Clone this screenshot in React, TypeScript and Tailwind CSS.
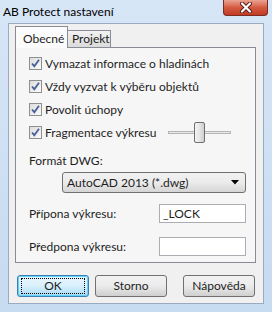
import React from 'react';

function CheckBox() {
  return (
    <span className="w-[13px] h-[13px] border border-[#8e8f8f] bg-gradient-to-br from-[#dcdcdc] to-[#fbfbfb] flex items-center justify-center shrink-0">
      <svg width="11" height="11" viewBox="0 0 11 11">
        <path d="M2 5.5 L4.3 8.2 L9 1.8" fill="none" stroke="#4a5f97" strokeWidth="1.8" />
      </svg>
    </span>
  );
}

function Row({ label, children }: { label: string; children?: React.ReactNode }) {
  return (
    <div className="h-[23px] flex items-center">
      <CheckBox />
      <span className="ml-[3px]">{label}</span>
      {children}
    </div>
  );
}

function Btn({ label, focused }: { label: string; focused?: boolean }) {
  return (
    <button
      className={`w-[72px] h-[22px] rounded-[3px] border flex items-center justify-center ${
        focused
          ? 'border-[#3c7fb1] bg-gradient-to-b from-[#eaf6fd] via-[#d9f0fc] to-[#a7d9f5] shadow-[inset_0_0_0_1px_#5fd3ff]'
          : 'border-[#707070] bg-gradient-to-b from-[#f2f2f2] via-[#ebebeb] to-[#cfcfcf]'
      }`}
    >
      {focused ? (
        <span className="w-[64px] h-[16px] border border-dotted border-black flex items-center justify-center">{label}</span>
      ) : (
        <span>{label}</span>
      )}
    </button>
  );
}

export default function App() {
  return (
    <div className="w-[272px] h-[312px] relative flex flex-col bg-gradient-to-b from-[#d7e6f7] to-[#c6daf0] font-['Lato',sans-serif] text-[12px] text-[#1e1e1e]">
      {/* title bar */}
      <div className="h-[23px] flex items-center pl-[3px] text-[12px] text-black">AB Protect nastavení</div>
      <div className="absolute left-[223px] top-0 w-[45px] h-[16px] rounded-b-[4px] border border-t-0 border-[#7b2b22] bg-gradient-to-b from-[#eaa393] via-[#d45a42] to-[#c13a22] flex items-center justify-center">
        <svg width="14" height="11" viewBox="0 0 14 11">
          <path d="M3 1.5 L11 9.5 M11 1.5 L3 9.5" stroke="#5a1d15" strokeWidth="4" strokeLinecap="round" />
          <path d="M3 1.5 L11 9.5 M11 1.5 L3 9.5" stroke="#ffffff" strokeWidth="2.2" strokeLinecap="round" />
        </svg>
      </div>

      {/* client area */}
      <div className="mx-[8px] h-[281px] border border-[#9aabc1] bg-[#f0f0f0] pl-[6px] pt-[2px]">
        {/* tabs */}
        <div className="flex items-end h-[21px]">
          <div className="relative z-10 w-[53px] h-[22px] -mb-px border border-b-0 border-[#898c95] bg-[#fbfbfb] pl-[7px] pt-[3px]">
            Obecné
          </div>
          <div className="w-[43px] h-[17px] border border-l-0 border-b-0 border-[#898c95] bg-gradient-to-b from-[#f2f2f2] to-[#dbdbdb] pl-[4px] leading-[16px]">
            Projekt
          </div>
        </div>
        {/* panel */}
        <div className="w-[241px] h-[216px] border border-[#898c95] bg-[#f6f6f6] pl-[13px] pt-[4px]">
          <Row label="Vymazat informace o hladinách" />
          <Row label="Vždy vyzvat k výběru objektů" />
          <Row label="Povolit úchopy" />
          <Row label="Fragmentace výkresu">
            <div className="ml-auto mr-[24px] w-[63px] h-[21px] relative flex items-center">
              <div className="w-full h-[3px] border border-[#b5b5b5] bg-[#e7eaea]" />
              <div className="absolute left-[26px] top-0 w-[11px] h-[21px] rounded-[2px] border border-[#707070] bg-gradient-to-r from-[#f3f3f3] via-[#e6e6e6] to-[#cfcfcf]" />
            </div>
          </Row>
          <div className="mt-[9px] leading-[15px]">Formát DWG:</div>
          <div className="mt-[4px] ml-[33px] w-[184px] h-[21px] rounded-[3px] border border-[#707070] bg-gradient-to-b from-[#f2f2f2] via-[#ebebeb] to-[#d5d5d5] flex items-center pl-[4px] pr-[6px]">
            <span>AutoCAD 2013 (*.dwg)</span>
            <svg className="ml-auto" width="8" height="5" viewBox="0 0 8 5">
              <path d="M0 0 H8 L4 4.5 Z" fill="#000" />
            </svg>
          </div>
          <div className="mt-[11px] h-[19px] flex items-center">
            <span>Přípona výkresu:</span>
            <div className="ml-auto mr-[9px] w-[87px] h-[19px] border border-[#abadb3] bg-white pl-[3px] leading-[17px]">_LOCK</div>
          </div>
          <div className="mt-[14px] h-[19px] flex items-center">
            <span>Předpona výkresu:</span>
            <div className="ml-auto mr-[9px] w-[87px] h-[19px] border border-[#abadb3] bg-white" />
          </div>
        </div>
        {/* buttons */}
        <div className="mt-[12px] flex">
          <div className="ml-[2px]">
            <Btn label="OK" focused />
          </div>
          <div className="ml-[6px]">
            <Btn label="Storno" />
          </div>
          <div className="ml-[16px]">
            <Btn label="Nápověda" />
          </div>
        </div>
      </div>
    </div>
  );
}
